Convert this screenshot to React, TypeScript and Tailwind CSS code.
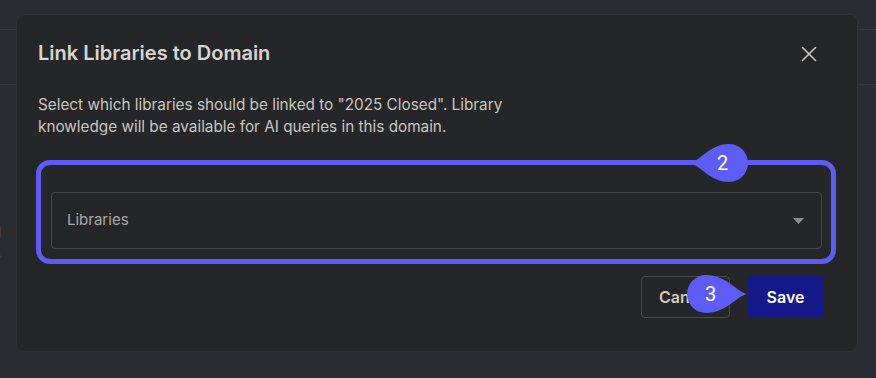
import React from 'react';
import { X } from 'lucide-react';

const Drop = ({ n, dir, className }: { n: string; dir: 'left' | 'right'; className: string }) => {
  const d =
    dir === 'right'
      ? 'M60 19 C50 17 39 0 19 0 A19 19 0 1 0 19 38 C39 38 50 21 60 19 Z'
      : 'M0 19 C10 17 20 0 39 0 A19 19 0 1 1 39 38 C20 38 10 21 0 19 Z';
  return (
    <div className={`absolute h-[38px] ${className}`}>
      <svg width={dir === 'right' ? 60 : 58} height="38" viewBox={dir === 'right' ? '0 0 60 38' : '0 0 58 38'} className="absolute inset-0">
        <path d={d} fill="#5d5cf5" />
      </svg>
      <span
        className={`absolute top-0 h-[38px] leading-[38px] text-[20px] text-white ${dir === 'right' ? 'left-[18px]' : 'left-[27px]'}`}
        style={{ fontFamily: 'Roboto, "Liberation Sans", sans-serif' }}
      >
        {n}
      </span>
    </div>
  );
};

const App: React.FC = () => {
  return (
    <div className="relative w-[876px] h-[378px] overflow-hidden bg-[#2b2c31]" style={{ fontFamily: 'Inter, "Liberation Sans", sans-serif' }}>
      {/* page behind the dialog */}
      <div className="flex flex-col text-[13px] text-[#9a9ba0]">
        <div className="h-[30px] border-b border-[#35363b]" />
        <div className="h-[55px] border-b border-[#35363b]" />
        <div className="h-[138px]" />
        <div className="h-[24px] -ml-[7px]">d</div>
        <div className="h-[86px] -ml-[7px]">e</div>
        <div className="-ml-[7px]">s</div>
      </div>

      {/* dialog */}
      <div className="absolute left-[16px] top-[14px] w-[842px] h-[338px] rounded-lg border border-[#303136] bg-[#252627] flex flex-col">
        <div className="flex items-center justify-between pl-[21px] pr-[35px] pt-[24px]">
          <h2 className="text-[20px] leading-[28px] font-semibold text-[#d8d5cf]">Link Libraries to Domain</h2>
          <X className="w-[26px] h-[26px] mt-[2px] text-[#cdc9c2]" strokeWidth={1.5} />
        </div>

        <p className="pl-[21px] mt-[27px] w-[560px] text-[15.3px] leading-[22px] text-[#c9c6c0]">
          Select which libraries should be linked to "2025 Closed". Library knowledge will be available for AI queries in this domain.
        </p>

        <div className="ml-[19px] mt-[22px] w-[800px] rounded-[14px] border-[5px] border-[#5d5cf5] pt-[27px] pl-[10px] pr-[9px] pb-[10px]">
          <div className="h-[57px] rounded-[4px] border border-[#474849] flex items-center justify-between pl-[15px] pr-[17px]">
            <span className="text-[15px] text-[#a9a9a9]">Libraries</span>
            <svg width="11" height="6" viewBox="0 0 11 6">
              <path d="M0 0 L11 0 L5.5 6 Z" fill="#8d8d8d" />
            </svg>
          </div>
        </div>

        <div className="flex justify-end gap-[18px] mt-[12px] pr-[34px]">
          <button className="h-[42px] w-[89px] rounded-[4px] border border-[#4a4a4a] pl-[17px] text-left text-[16px] font-semibold text-[#d6c9b6]">
            Cancel
          </button>
          <button className="h-[42px] w-[75px] rounded-[4px] bg-[#141a8c] text-[16px] font-semibold text-white">
            Save
          </button>
        </div>
      </div>

      <Drop n="2" dir="left" className="left-[690px] top-[144px] w-[58px]" />
      <Drop n="3" dir="right" className="left-[687px] top-[275px] w-[60px]" />
    </div>
  );
};

export default App;
